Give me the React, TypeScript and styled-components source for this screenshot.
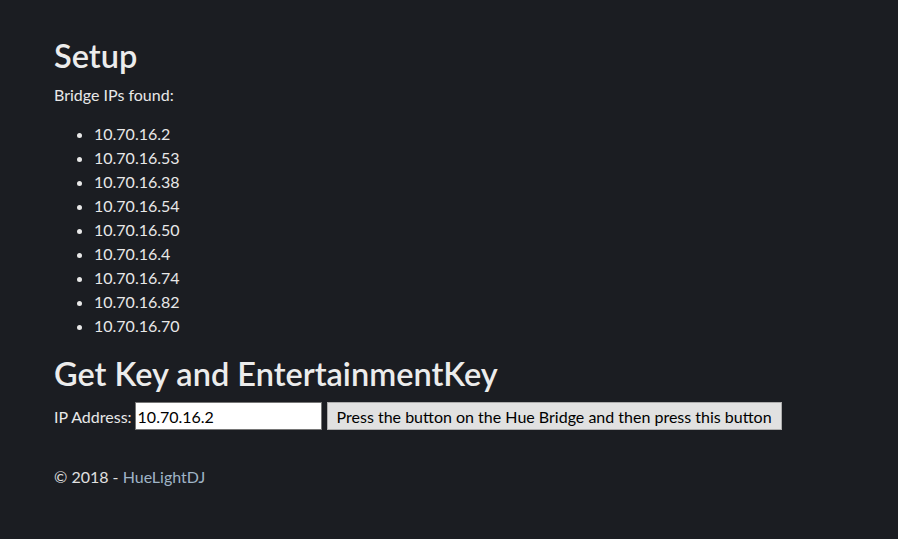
import React, { useState } from "react";
import styled, { createGlobalStyle } from "styled-components";

const GlobalStyle = createGlobalStyle`
  html, body {
    margin: 0;
    padding: 0;
    background: #1b1d22;
  }
  body {
    font-family: "Lato", "Noto Sans", sans-serif;
    color: #e8e8e8;
  }
`;

const Page = styled.div`
  min-height: 539px;
  padding: 38px 54px 0;
  box-sizing: border-box;
`;

const Heading = styled.h2`
  font-size: 32.5px;
  font-weight: 600;
  line-height: 36px;
  margin: 0 0 10px;
  color: #ececec;
`;

const Text = styled.p`
  font-size: 16px;
  line-height: 22px;
  margin: 0;
`;

const IpList = styled.ul`
  list-style: disc;
  margin: 16px 0 18px;
  padding-left: 40px;
  font-size: 16px;
  line-height: 24px;
`;

const Form = styled.div`
  display: flex;
  align-items: center;
  margin-top: 2px;
  font-size: 16px;
`;

const Label = styled.label`
  margin-right: 3px;
`;

const Input = styled.input`
  width: 187px;
  height: 28px;
  box-sizing: border-box;
  border: 1px solid #767676;
  background: #fff;
  color: #000;
  font: inherit;
  padding: 0 2px;
  outline: none;
`;

const Button = styled.button`
  margin-left: 5px;
  height: 28px;
  padding: 0 9px;
  border: 1px solid #adadad;
  background: #e1e1e1;
  color: #000;
  font: inherit;
  cursor: pointer;
`;

const Footer = styled.footer`
  margin-top: 36px;
  font-size: 16px;
  line-height: 22px;
  color: #e0e0e0;
`;

const Link = styled.a`
  color: #9fb4c6;
  text-decoration: none;
`;

const ips = [
  "10.70.16.2",
  "10.70.16.53",
  "10.70.16.38",
  "10.70.16.54",
  "10.70.16.50",
  "10.70.16.4",
  "10.70.16.74",
  "10.70.16.82",
  "10.70.16.70",
];

export default function App() {
  const [ip, setIp] = useState("10.70.16.2");

  return (
    <>
      <GlobalStyle />
      <Page>
        <Heading>Setup</Heading>
        <Text>Bridge IPs found:</Text>
        <IpList>
          {ips.map((item) => (
            <li key={item}>{item}</li>
          ))}
        </IpList>
        <Heading>Get Key and EntertainmentKey</Heading>
        <Form>
          <Label htmlFor="ip">IP Address:</Label>
          <Input id="ip" value={ip} onChange={(e) => setIp(e.target.value)} />
          <Button>Press the button on the Hue Bridge and then press this button</Button>
        </Form>
        <Footer>
          © 2018 - <Link href="#">HueLightDJ</Link>
        </Footer>
      </Page>
    </>
  );
}
